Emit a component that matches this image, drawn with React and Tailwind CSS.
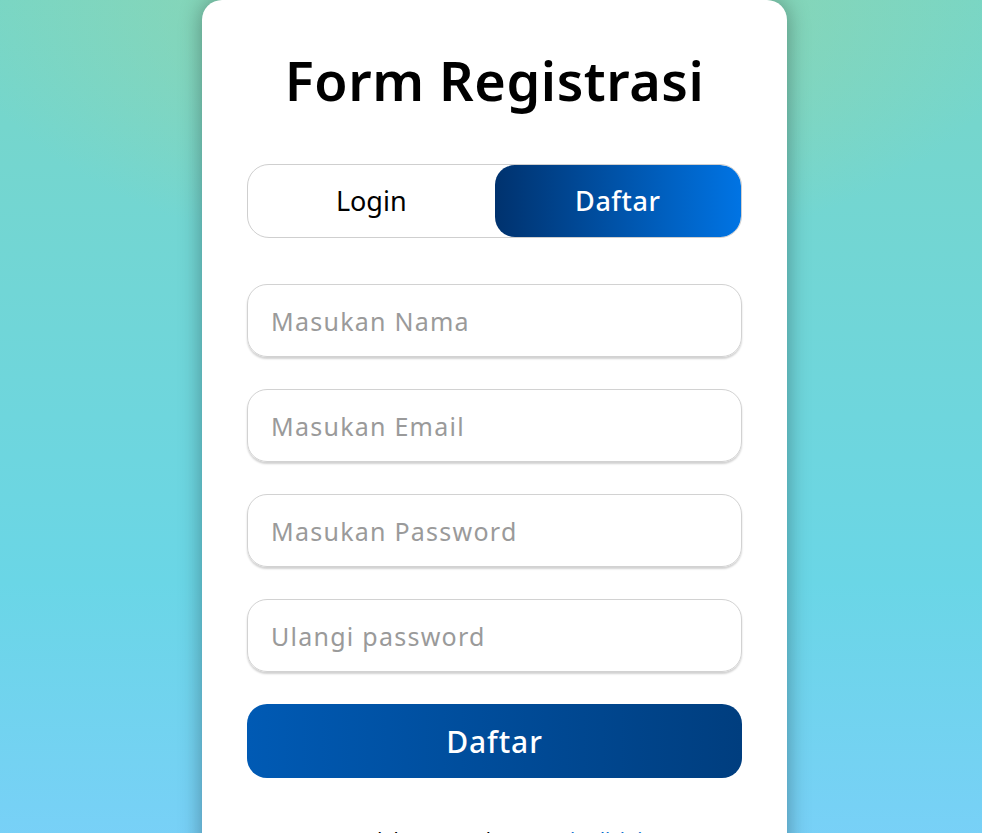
import React, { useState } from "react";

const fields = [
  { type: "text", placeholder: "Masukan Nama" },
  { type: "email", placeholder: "Masukan Email" },
  { type: "password", placeholder: "Masukan Password" },
  { type: "password", placeholder: "Ulangi password" },
];

const App = () => {
  const [mode, setMode] = useState("daftar");

  return (
    <div
      className="min-h-screen w-full bg-[radial-gradient(ellipse_55%_30%_at_50%_0%,#93d5aa,transparent),linear-gradient(180deg,#78d6c6_0%,#6ad6e6_65%,#7bcffb_100%)] overflow-hidden"
      style={{ fontFamily: '"Noto Sans", "Liberation Sans", sans-serif' }}
    >
      <div className="ml-[202px] w-[585px] bg-white rounded-[20px] shadow-[0_0_22px_rgba(0,0,0,0.35)] px-[45px] pt-[44px] pb-[40px]">
        <h1 className="text-center text-[54px] leading-[72px] font-semibold text-black tracking-[0.01em]">
          Form Registrasi
        </h1>

        {/* Toggle */}
        <div className="mt-[48px] flex h-[74px] rounded-[22px] border border-[#cfcfcf] overflow-hidden">
          <button
            onClick={() => setMode("login")}
            className={`flex-1 text-[27px] rounded-[20px] ${
              mode === "login"
                ? "bg-[linear-gradient(90deg,#00326e,#0074e4)] text-white font-medium"
                : "text-black"
            }`}
          >
            Login
          </button>
          <button
            onClick={() => setMode("daftar")}
            className={`flex-1 text-[27px] rounded-[20px] tracking-[0.02em] ${
              mode === "daftar"
                ? "bg-[linear-gradient(90deg,#00326e,#0074e4)] text-white font-medium"
                : "text-black"
            }`}
          >
            Daftar
          </button>
        </div>

        {/* Inputs */}
        <div className="mt-[46px] flex flex-col gap-[32px]">
          {fields.map((f) => (
            <input
              key={f.placeholder}
              type={f.type}
              placeholder={f.placeholder}
              className="h-[73px] w-full rounded-[20px] border border-[#d2d2d2] shadow-[0_2px_2px_rgba(0,0,0,0.18)] px-[23px] text-[25px] tracking-[0.05em] text-black placeholder:text-[#9a9a9a] outline-none"
            />
          ))}
        </div>

        <button className="mt-[32px] h-[74px] w-full rounded-[20px] bg-[linear-gradient(90deg,#005ab4,#003e7f)] text-white text-[30px] tracking-[0.03em] font-medium">
          Daftar
        </button>

        <p className="mt-[47px] text-center text-[20px] text-black">
          Sudah punya akun? <a href="#" className="text-[#0066cc]">Login disini</a>
        </p>
      </div>
    </div>
  );
};

export default App;
